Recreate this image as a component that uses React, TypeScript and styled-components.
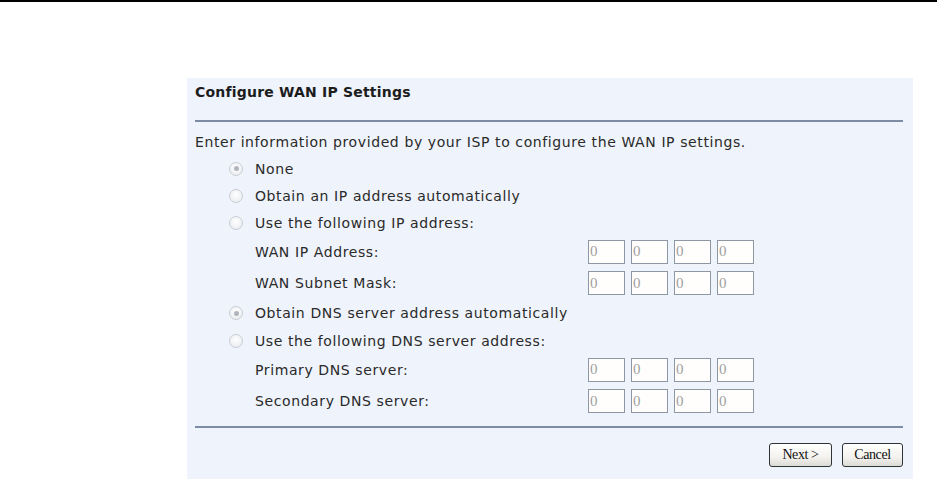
import React from "react";
import styled, { createGlobalStyle } from "styled-components";

const Global = createGlobalStyle`
  html, body { margin: 0; padding: 0; background: #ffffff; }
  body { width: 942px; height: 479px; overflow: hidden; }
`;

const Page = styled.div`
  width: 942px;
  height: 479px;
  display: flex;
  flex-direction: column;
`;

const TopRule = styled.div`
  height: 2px;
  margin-right: 5px;
  background: #000;
`;

const Panel = styled.div`
  margin: 76px 29px 0 187px;
  flex: 1;
  background: #eff3fb;
  padding: 0 10px 0 8px;
  display: flex;
  flex-direction: column;
  font-family: "DejaVu Sans", Verdana, sans-serif;
  font-size: 14px;
  letter-spacing: 0.6px;
  color: #2a2a2a;
`;

const Title = styled.div`
  height: 42px;
  display: flex;
  align-items: center;
  padding-bottom: 15px;
  box-sizing: border-box;
  font-weight: bold;
  font-size: 14px;
  letter-spacing: 0.2px;
  color: #1c1c1c;
`;

const Rule = styled.div<{ $gap?: number }>`
  height: 2px;
  background: #7d8ca5;
  margin-top: ${(p) => p.$gap ?? 0}px;
`;

const Body = styled.div`
  padding-top: 6px;
  display: flex;
  flex-direction: column;
`;

const Row = styled.div<{ $h: number; $indent?: number }>`
  height: ${(p) => p.$h}px;
  display: flex;
  align-items: center;
  padding-left: ${(p) => p.$indent ?? 0}px;
`;

const Radio = styled.span<{ $on?: boolean }>`
  width: 12px;
  height: 12px;
  border-radius: 50%;
  border: 1px solid #c9ced6;
  background: radial-gradient(circle at 50% 40%, #ffffff 0%, #eef0f3 65%, #dde1e6 100%);
  margin-left: 34px;
  margin-right: 12px;
  display: flex;
  align-items: center;
  justify-content: center;
  &::after {
    content: "";
    width: 5px;
    height: 5px;
    border-radius: 50%;
    background: ${(p) => (p.$on ? "#b0b5bc" : "transparent")};
  }
`;

const Label = styled.span<{ $w?: number }>`
  width: ${(p) => (p.$w ? `${p.$w}px` : "auto")};
  white-space: nowrap;
`;

const IpGroup = styled.div`
  display: flex;
  gap: 6px;
`;

const Octet = styled.input`
  width: 37px;
  height: 24px;
  box-sizing: border-box;
  border: 1px solid #8e98a4;
  background: #fffefc;
  padding: 0 0 0 1px;
  font-family: "Liberation Serif", "Times New Roman", serif;
  font-size: 15px;
  letter-spacing: 0;
  color: #a0a0a0;
  outline: none;
`;

const Footer = styled.div`
  display: flex;
  justify-content: flex-end;
  gap: 10px;
  margin-top: 15px;
`;

const Button = styled.button<{ $w: number }>`
  width: ${(p) => p.$w}px;
  height: 24px;
  border: 1px solid #2e3338;
  border-radius: 3px;
  background: linear-gradient(#ffffff, #f3f2ee 60%, #dcdcd6);
  font-family: "Liberation Serif", "Times New Roman", serif;
  font-size: 14px;
  color: #111;
  padding: 0;
  letter-spacing: -0.4px;
`;

const IpInputs = () => (
  <IpGroup>
    {[0, 1, 2, 3].map((i) => (
      <Octet key={i} defaultValue="0" readOnly />
    ))}
  </IpGroup>
);

export default function App() {
  return (
    <>
      <Global />
      <Page>
        <TopRule />
        <Panel>
          <Title>Configure WAN IP Settings</Title>
          <Rule />
          <Body>
            <Row $h={27}>Enter information provided by your ISP to configure the WAN IP settings.</Row>
            <Row $h={27}><Radio $on /><Label>None</Label></Row>
            <Row $h={27}><Radio /><Label>Obtain an IP address automatically</Label></Row>
            <Row $h={27}><Radio /><Label>Use the following IP address:</Label></Row>
            <Row $h={31} $indent={60}><Label $w={333}>WAN IP Address:</Label><IpInputs /></Row>
            <Row $h={32} $indent={60}><Label $w={333}>WAN Subnet Mask:</Label><IpInputs /></Row>
            <Row $h={28}><Radio $on /><Label>Obtain DNS server address automatically</Label></Row>
            <Row $h={27}><Radio /><Label>Use the following DNS server address:</Label></Row>
            <Row $h={31} $indent={60}><Label $w={333}>Primary DNS server:</Label><IpInputs /></Row>
            <Row $h={32} $indent={60}><Label $w={333}>Secondary DNS server:</Label><IpInputs /></Row>
          </Body>
          <Rule $gap={9} />
          <Footer>
            <Button $w={63}>Next &gt;</Button>
            <Button $w={61}>Cancel</Button>
          </Footer>
        </Panel>
      </Page>
    </>
  );
}
